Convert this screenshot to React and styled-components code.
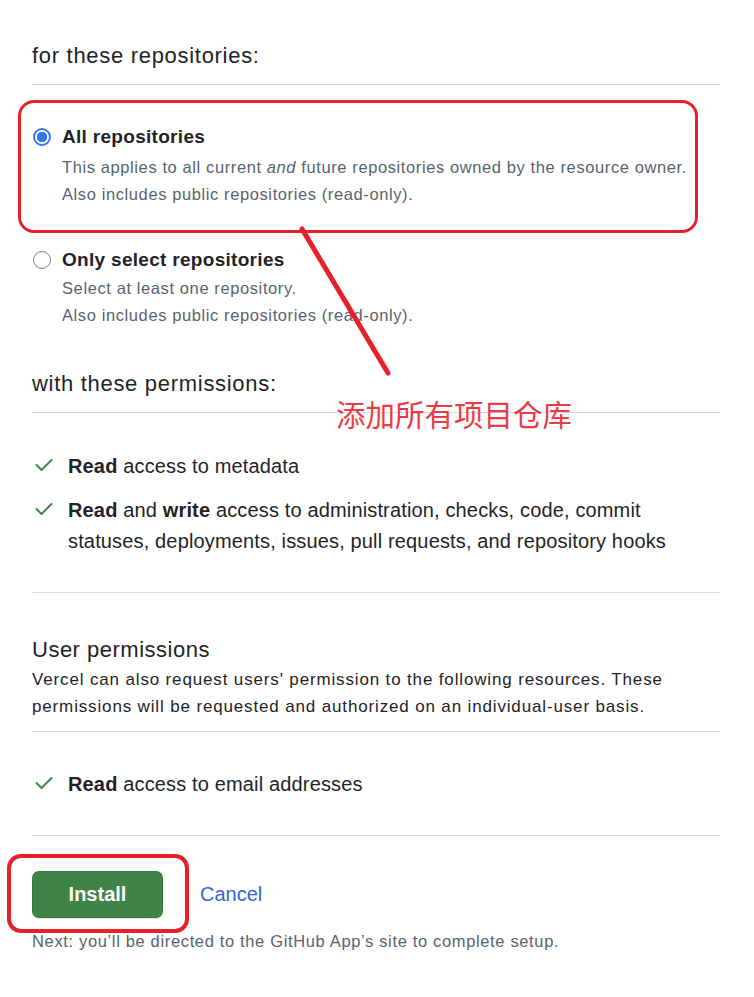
import React from 'react';
import styled, { createGlobalStyle } from 'styled-components';

const GlobalStyle = createGlobalStyle`
  html, body {
    margin: 0;
    padding: 0;
    background: #ffffff;
  }
  body {
    font-family: 'Liberation Sans', Arial, sans-serif;
    color: #1f2328;
  }
`;

const Page = styled.div`
  position: relative;
  width: 754px;
  min-height: 997px;
  box-sizing: border-box;
  padding: 40px 34px 0 32px;
`;

const SectionTitle = styled.h3`
  margin: 0;
  font-size: 22px;
  font-weight: 400;
  letter-spacing: 0.7px;
  line-height: 32px;
  color: #1f2328;
  padding-bottom: 12px;
  border-bottom: 1px solid #d1d9e0;
`;

const OptionList = styled.div`
  display: flex;
  flex-direction: column;
  gap: 37px;
  padding: 37px 0 39px;
`;

const Option = styled.label`
  display: grid;
  grid-template-columns: 18px 1fr;
  column-gap: 12px;
  align-items: center;
`;

const Radio = styled.span`
  width: 18px;
  height: 18px;
  box-sizing: border-box;
  border-radius: 50%;
  margin-left: 1px;
  border: ${({ checked }) => (checked ? '2px solid #3a74f0' : '1.5px solid #7a7f86')};
  background: ${({ checked }) =>
    checked ? 'radial-gradient(circle, #3a74f0 0 5px, #ffffff 5.5px)' : '#ffffff'};
`;

const OptionTitle = styled.span`
  font-size: 19px;
  font-weight: 700;
  letter-spacing: 0.3px;
  line-height: 30px;
  color: #1f2328;
`;

const OptionNote = styled.p`
  grid-column: 2;
  margin: ${({ tight }) => (tight ? '0' : '2px 0 0')};
  font-size: 16.5px;
  letter-spacing: 0.6px;
  line-height: 27px;
  color: #59636e;
`;

const PermList = styled.ul`
  list-style: none;
  margin: 0;
  padding: ${({ top }) => top}px 0 35px;
  display: flex;
  flex-direction: column;
  gap: 13px;
  border-bottom: 1px solid #d8dee4;
`;

const PermItem = styled.li`
  display: grid;
  grid-template-columns: 36px 1fr;
  font-size: 20px;
  letter-spacing: 0.15px;
  line-height: 31px;
  color: #1f2328;

  b {
    font-weight: 700;
  }

  span {
    max-width: 620px;
  }
`;

const CheckMark = styled.svg`
  width: 18px;
  height: 14px;
  margin: 7px 0 0 3px;
  color: #3a8a47;
`;

const UserBlock = styled.div`
  padding-top: 41px;
  padding-bottom: 11px;
  border-bottom: 1px solid #d8dee4;
`;

const UserTitle = styled.h3`
  margin: 0;
  font-size: 22px;
  font-weight: 400;
  letter-spacing: 0.5px;
  line-height: 32px;
`;

const UserNote = styled.p`
  margin: 0;
  font-size: 17px;
  letter-spacing: 0.85px;
  line-height: 27px;
  color: #1f2328;
`;

const Actions = styled.div`
  display: flex;
  align-items: center;
  gap: 37px;
  padding-top: 35px;
`;

const InstallButton = styled.button`
  width: 131px;
  height: 47px;
  border: 1px solid rgba(27, 31, 36, 0.15);
  border-radius: 7px;
  background: #3f8446;
  color: #ffffff;
  font-family: inherit;
  font-size: 20px;
  font-weight: 700;
  box-shadow: 0 1px 0 rgba(27, 31, 36, 0.1);
`;

const CancelLink = styled.a`
  color: #3563d6;
  font-size: 20px;
  font-weight: 400;
  text-decoration: none;
`;

const NextNote = styled.p`
  margin: 11px 0 0;
  font-size: 16.5px;
  letter-spacing: 0.65px;
  line-height: 24px;
  color: #59636e;
`;

const MarkBox = styled.div`
  position: absolute;
  box-sizing: border-box;
  border: ${({ thick }) => thick}px solid #e8202a;
  border-radius: ${({ radius }) => radius}px;
  pointer-events: none;
`;

const Pointer = styled.svg`
  position: absolute;
  left: 0;
  top: 0;
  pointer-events: none;
`;

const MarkText = styled.div`
  position: absolute;
  left: 336px;
  top: 393px;
  font-family: 'Noto Sans CJK SC', sans-serif;
  font-size: 29.5px;
  line-height: 40px;
  color: #ee3a44;
  white-space: nowrap;
`;

const Check = () => (
  <CheckMark viewBox="0 0 18 14" fill="none">
    <polyline
      points="1.5,7 6.5,12 16.5,2"
      stroke="currentColor"
      strokeWidth="2"
      strokeLinecap="round"
      strokeLinejoin="round"
    />
  </CheckMark>
);

export default function App() {
  return (
    <>
      <GlobalStyle />
      <Page>
        <SectionTitle>for these repositories:</SectionTitle>
        <OptionList>
          <Option>
            <Radio checked />
            <OptionTitle>All repositories</OptionTitle>
            <OptionNote>
              This applies to all current <i>and</i> future repositories owned by the resource owner.
              <br />
              Also includes public repositories (read-only).
            </OptionNote>
          </Option>
          <Option>
            <Radio />
            <OptionTitle>Only select repositories</OptionTitle>
            <OptionNote tight>
              Select at least one repository.
              <br />
              Also includes public repositories (read-only).
            </OptionNote>
          </Option>
        </OptionList>

        <SectionTitle>with these permissions:</SectionTitle>
        <PermList top={38}>
          <PermItem>
            <Check />
            <span><b>Read</b> access to metadata</span>
          </PermItem>
          <PermItem>
            <Check />
            <span>
              <b>Read</b> and <b>write</b> access to administration, checks, code, commit statuses,
              deployments, issues, pull requests, and repository hooks
            </span>
          </PermItem>
        </PermList>

        <UserBlock>
          <UserTitle>User permissions</UserTitle>
          <UserNote>
            Vercel can also request users' permission to the following resources. These
            permissions will be requested and authorized on an individual-user basis.
          </UserNote>
        </UserBlock>
        <PermList top={37}>
          <PermItem>
            <Check />
            <span><b>Read</b> access to email addresses</span>
          </PermItem>
        </PermList>

        <Actions>
          <InstallButton>Install</InstallButton>
          <CancelLink href="#">Cancel</CancelLink>
        </Actions>
        <NextNote>Next: you’ll be directed to the GitHub App’s site to complete setup.</NextNote>

        <MarkBox thick={3.5} radius={16} style={{ left: 18, top: 100, width: 680, height: 133 }} />
        <Pointer width="754" height="997">
          <line x1="302" y1="229" x2="388" y2="373" stroke="#e8202a" strokeWidth="5" strokeLinecap="round" />
        </Pointer>
        <MarkText>添加所有项目仓库</MarkText>
        <MarkBox thick={4} radius={14} style={{ left: 7, top: 854, width: 182, height: 79 }} />
      </Page>
    </>
  );
}
